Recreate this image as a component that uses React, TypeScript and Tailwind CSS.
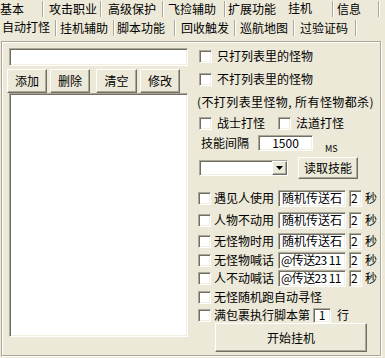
import React from "react";

const F = "font-['Noto_Sans_CJK_SC','Noto_Sans',sans-serif]";

const sunken =
  "bg-white border border-t-[#aca899] border-l-[#aca899] border-b-white border-r-white shadow-[inset_1px_1px_0_#716f64,inset_-1px_-1px_0_#f1efe2]";
const raised =
  "bg-[#ece9d8] border border-t-white border-l-white border-b-[#716f64] border-r-[#716f64] shadow-[inset_-1px_-1px_0_#aca899]";

type T = { l: string; w: number; p: number; sep?: boolean; sel?: boolean };

const row1: T[] = [
  { l: "基本", w: 44, p: 0, sep: true },
  { l: "攻击职业", w: 58, p: 5, sep: true },
  { l: "高级保护", w: 62, p: 6, sep: true },
  { l: "飞捡辅助", w: 62, p: 4, sep: true },
  { l: "扩展功能", w: 58, p: 2, sep: false },
  { l: "挂机", w: 50, p: 4, sep: true, sel: true },
  { l: "信息", w: 46, p: 3, sep: true },
];
const row2: T[] = [
  { l: "自动打怪", w: 57, p: 2, sep: true, sel: true },
  { l: "挂机辅助", w: 58, p: 3, sep: true },
  { l: "脚本功能", w: 61, p: 2, sep: true },
  { l: "回收触发", w: 60, p: 5, sep: true },
  { l: "巡航地图", w: 59, p: 4, sep: true },
  { l: "过验证码", w: 62, p: 5, sep: true },
];

function TabRow({ tabs }: { tabs: T[] }) {
  return (
    <div className="flex h-[18px]">
      {tabs.map((t) => (
        <div
          key={t.l}
          className="flex items-center h-[18px]"
          style={{ width: t.w }}
        >
          <span
            className={"flex-1 whitespace-nowrap leading-none " + (t.sel ? "-mt-[2px]" : "")}
            style={{ paddingLeft: t.p }}
          >
            {t.l}
          </span>
          {t.sep ? (
            <span className="w-[2px] h-[16px] border-l border-[#aca899] bg-white" />
          ) : null}
        </div>
      ))}
    </div>
  );
}

function Check({ className = "" }: { className?: string }) {
  return <span className={"inline-block w-[13px] h-[13px] shrink-0 " + sunken + " " + className} />;
}

function Btn({ children, className = "" }: { children: React.ReactNode; className?: string }) {
  return (
    <div className={"flex items-center justify-center leading-none " + raised + " " + className}>
      {children}
    </div>
  );
}

function InputRow({ label, value, mt, tight }: { label: string; value: string; mt: string; tight?: boolean }) {
  return (
    <div className={"flex items-center h-[18px] " + mt}>
      <Check className="ml-[1px]" />
      <span className="ml-[3px] w-[64px] whitespace-nowrap leading-none">{label}</span>
      <div
        className={
          "w-[68px] h-[17px] flex items-center leading-none whitespace-nowrap overflow-hidden " +
          (tight ? "pl-[2px] tracking-[-0.6px] " : "pl-[3px] ") +
          sunken
        }
      >
        {value}
      </div>
      <div className={"ml-[3px] w-[13px] h-[17px] flex items-center pl-[1px] leading-none " + sunken}>2</div>
      <span className="ml-[3px] leading-none">秒</span>
    </div>
  );
}

export default function App() {
  return (
    <div className={"w-[385px] h-[358px] bg-[#ece9d8] text-black text-[12px] overflow-hidden " + F}>
      <TabRow tabs={row1} />
      <div className="h-[1px]" />
      <TabRow tabs={row2} />
      <div className="ml-[1px] mt-[4px] w-[380px] h-[315px] border border-[#aca899] shadow-[inset_1px_1px_0_#fff,1px_1px_0_#fff] flex">
        {/* left column */}
        <div className="ml-[7px] mt-[6px] w-[179px] flex flex-col">
          <div className={"h-[18px] " + sunken} />
          <div className="flex mt-[3px] -ml-[2px] h-[24px]">
            <Btn className="w-[40px] h-[24px]">添加</Btn>
            <Btn className="ml-[3px] w-[40px] h-[24px]">删除</Btn>
            <Btn className="ml-[6px] w-[41px] h-[24px]">清空</Btn>
            <Btn className="ml-[3px] w-[40px] h-[24px]">修改</Btn>
          </div>
          <div className={"h-[244px] " + sunken} />
        </div>
        {/* right column */}
        <div className="ml-[9px] flex flex-col w-[183px]">
          <div className="flex items-center h-[18px] mt-[5px]">
            <Check className="ml-[2px]" />
            <span className="ml-[5px] leading-none">只打列表里的怪物</span>
          </div>
          <div className="flex items-center h-[18px] mt-[5px]">
            <Check className="ml-[2px]" />
            <span className="ml-[5px] leading-none">不打列表里的怪物</span>
          </div>
          <div className="flex items-center h-[18px] mt-[5px]">
            <span className="leading-none whitespace-nowrap tracking-[0.4px]">(不打列表里怪物, 所有怪物都杀)</span>
          </div>
          <div className="flex items-center h-[18px] mt-[3px]">
            <Check className="ml-[2px]" />
            <span className="ml-[5px] leading-none">战士打怪</span>
            <Check className="ml-[13px]" />
            <span className="ml-[5px] leading-none">法道打怪</span>
          </div>
          <div className="flex items-center h-[18px] mt-[2px]">
            <span className="ml-[4px] w-[57px] leading-none">技能间隔</span>
            <div className={"w-[55px] h-[16px] flex items-center justify-center leading-none " + sunken}>1500</div>
            <span className="ml-[12px] mt-[10px] text-[9px] leading-none">MS</span>
          </div>
          <div className="flex items-center h-[22px] mt-[5px]">
            <div className={"ml-[2px] w-[89px] h-[16px] flex justify-end " + sunken}>
              <div className={"w-[15px] h-[14px] flex items-center justify-center " + raised}>
                <svg width="7" height="4" viewBox="0 0 7 4">
                  <path d="M0 0H7L3.5 4Z" fill="#000" />
                </svg>
              </div>
            </div>
            <Btn className="ml-[10px] w-[60px] h-[22px]">读取技能</Btn>
          </div>
          <InputRow label="遇见人使用" value="随机传送石" mt="mt-[10px]" />
          <InputRow label="人物不动用" value="随机传送石" mt="mt-[4px]" />
          <InputRow label="无怪物时用" value="随机传送石" mt="mt-[3px]" />
          <InputRow label="无怪物喊话" value="@传送23 11" mt="mt-[1px]" tight />
          <InputRow label="人不动喊话" value="@传送23 11" mt="mt-[0px]" tight />
          <div className="flex items-center h-[18px] mt-[1px]">
            <Check className="ml-[1px]" />
            <span className="ml-[3px] leading-none">无怪随机跑自动寻怪</span>
          </div>
          <div className="flex items-center h-[16px] mt-[1px]">
            <Check className="ml-[1px]" />
            <span className="ml-[3px] w-[99px] leading-none whitespace-nowrap">满包裹执行脚本第</span>
            <div className={"w-[18px] h-[15px] flex items-center justify-center leading-none " + sunken}>1</div>
            <span className="ml-[6px] leading-none">行</span>
          </div>
          <Btn className="ml-[18px] w-[152px] h-[29px]">开始挂机</Btn>
        </div>
      </div>
    </div>
  );
}
